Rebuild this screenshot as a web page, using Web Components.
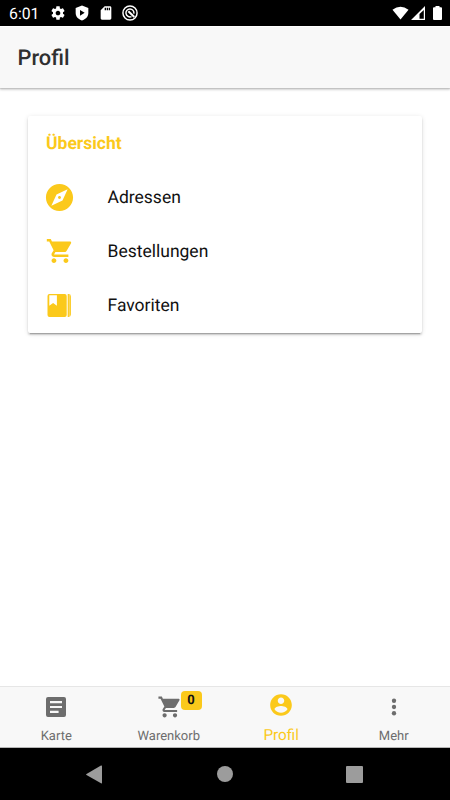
<!DOCTYPE html>
<html lang="de"><head><meta charset="utf-8"><title>Profil</title>
<style>html,body{margin:0;height:100%;overflow:hidden;background:#fff}body{font-family:Roboto,"Noto Sans",sans-serif;text-rendering:geometricPrecision}</style></head>
<body><profile-app></profile-app>
<script>
const icons={
 cart:['0 0 512 512','<path d="M169.6 377.6c-22.9 0-41.6 18.7-41.6 41.6s18.7 41.6 41.6 41.6 41.6-18.7 41.6-41.6-18.7-41.6-41.6-41.6zM48 51.2v41.6h41.6l74.9 151.7-31.3 50.9c-3.1 5.2-5.2 12.5-5.2 19.8 0 27.8 19 41.6 44.8 41.6H416v-40H177.9c-3.1 0-5.2-2.1-5.2-5.2 0-1 2.2-5.2 2.2-5.2l20.8-32.8h154.9c15.6 0 29.1-8.3 36.4-21.8l74.9-128.8c1.2-2.5 2.1-6.2 2.1-10.4 0-11.4-9.4-19.4-20.8-19.4H135.4L115.6 51.2H48zm326.4 326.4c-22.9 0-41.6 18.7-41.6 41.6s18.7 41.6 41.6 41.6S416 442.1 416 419.2s-18.7-41.6-41.6-41.6z"/>'],
 compass:['0 0 512 512','<path d="M256 231.4c-13.4 0-24.6 11.2-24.6 24.6s11.2 24.6 24.6 24.6 24.6-11.2 24.6-24.6-11.2-24.6-24.6-24.6zM256 32C132.8 32 32 132.8 32 256s100.8 224 224 224 224-100.8 224-224S379.2 32 256 32zm49.3 273.3L121.6 390.4l85.1-183.7L390.4 121.6l-85.1 183.7z"/>'],
 book:['0 0 31 31','<path fill-rule="evenodd" d="M5.500 4h15.200a2 2 0 0 1 2 2v19a2 2 0 0 1-2 2H5.500a2 2 0 0 1-2-2V6a2 2 0 0 1 2-2zM5.300 5.300v10.400L9.100 13l3.800 2.700V5.300z"/><path d="M23.700 4h.8a2.400 2.400 0 0 1 2.400 2.400v18.200a2.400 2.400 0 0 1-2.400 2.400h-.8z"/><path fill="#fff" opacity=".7" d="M24.900 4.500h.5v22h-.5z"/>'],
 list:['0 0 24 24','<path fill-rule="evenodd" d="M4 2h16a2 2 0 0 1 2 2v16a2 2 0 0 1-2 2H4a2 2 0 0 1-2-2V4a2 2 0 0 1 2-2zm2 4v2.200h12V6zm0 4.900V13.100h12v-2.200zM6 15.700v2.200h8.600v-2.200z"/>'],
 user:['0 0 24 24','<path d="M12 2C6.480 2 2 6.480 2 12s4.480 10 10 10 10-4.480 10-10S17.520 2 12 2zm0 3c1.660 0 3 1.340 3 3s-1.340 3-3 3-3-1.340-3-3 1.340-3 3-3zm0 14.200c-2.500 0-4.710-1.280-6-3.220.030-1.990 4-3.080 6-3.080 1.990 0 5.970 1.090 6 3.080-1.290 1.940-3.500 3.220-6 3.220z"/>'],
 more:['0 0 24 24','<circle cx="12" cy="6.2" r="2"/><circle cx="12" cy="12" r="2"/><circle cx="12" cy="17.8" r="2"/>'],
 gear:['0 0 24 24','<path d="M19.43 12.98c.04-.32.07-.64.07-.98s-.03-.66-.07-.98l2.11-1.65c.19-.15.24-.42.12-.64l-2-3.46c-.12-.22-.39-.3-.61-.22l-2.49 1c-.52-.4-1.08-.73-1.69-.98l-.38-2.65C14.46 2.18 14.25 2 14 2h-4c-.25 0-.46.18-.49.42l-.38 2.65c-.61.25-1.17.59-1.69.98l-2.49-1c-.23-.09-.49 0-.61.22l-2 3.46c-.13.22-.07.49.12.64l2.11 1.65c-.04.32-.07.65-.07.98s.03.66.07.98l-2.11 1.65c-.19.15-.24.42-.12.64l2 3.46c.12.22.39.3.61.22l2.49-1c.52.4 1.08.73 1.69.98l.38 2.65c.03.24.24.42.49.42h4c.25 0 .46-.18.49-.42l.38-2.65c.61-.25 1.17-.59 1.69-.98l2.49 1c.23.09.49 0 .61-.22l2-3.46c.12-.22.07-.49-.12-.64l-2.11-1.65zM12 15.5c-1.93 0-3.5-1.57-3.5-3.5s1.57-3.5 3.5-3.5 3.5 1.57 3.5 3.5-1.57 3.5-3.5 3.5z"/>'],
 shield:['0 0 24 24','<path fill-rule="evenodd" d="M12 .8 2.500 4.400V12c0 5.300 4 9.700 9.500 11.200 5.500-1.500 9.500-5.900 9.500-11.200V4.400zM9 7.500v8.500l7-4.250z"/>'],
 sd:['0 0 24 24','<path fill-rule="evenodd" d="M18 2h-8L4 8v12c0 1.100.9 2 2 2h12c1.100 0 2-.9 2-2V4c0-1.100-.9-2-2-2zm-6 6h-2V4h2zm3 0h-2V4h2zm3 0h-2V4h2z"/>'],
 search:['0 0 24 24','<g fill="none" stroke="currentColor" stroke-width="2.200"><circle cx="12" cy="12" r="10.600"/><path d="M14.200 17.400A6 6 0 1 1 17.800 13"/><path stroke-width="3" d="m9.500 9.500 9 8.500"/></g>'],
 wifi:['0 0 18 14','<path d="M.5 3.500Q9-3 17.500 3.500L9 14z"/>'],
 signal:['0 0 14 14','<path fill-rule="evenodd" d="M14 0v14H0zM12.800 4v8.800H8.500V8z"/>'],
 battery:['0 0 9 14','<path d="M2.500 0h4v1.300H8a1 1 0 0 1 1 1V13a1 1 0 0 1-1 1H1a1 1 0 0 1-1-1V2.300a1 1 0 0 1 1-1h1.500z"/>'],
 back:['0 0 16 19','<path d="M15 .5Q16 .1 16 1.200v16.600q0 1-1 .5L.5 10q-.8-.5 0-1z"/>'],
 home:['0 0 16 16','<circle cx="8" cy="8" r="8"/>'],
 recent:['0 0 17 17','<rect width="17" height="17" rx="1"/>']
};
const define=(name,html,setup)=>customElements.define(name,class extends HTMLElement{
 constructor(){super();this.attachShadow({mode:'open'})}
 connectedCallback(){
  const t=document.createElement('template');t.innerHTML=html;
  if(setup)setup(this,t.content);
  this.shadowRoot.replaceChildren(t.content.cloneNode(true));
 }
});
const copyIcon=(el,r)=>r.querySelector('app-icon').setAttribute('name',el.getAttribute('icon'));
define('app-icon','<style>:host{display:block;flex:none;width:var(--w);height:var(--h,var(--w))}svg{display:block;width:100%;height:100%;fill:currentColor}</style><svg></svg>',(el,r)=>{const i=icons[el.getAttribute('name')],s=r.querySelector('svg');s.setAttribute('viewBox',i[0]);s.innerHTML=i[1]});
define('status-bar',`<style>:host{display:flex;height:26px;background:#000;color:#fff;align-items:center;box-sizing:border-box;padding:0 8px 0 9px;font-size:15.800px;line-height:26px}.time{width:41px;padding-top:2px}.left{display:flex;gap:8px;align-items:center}.right{display:flex;gap:2px;margin-left:auto;align-items:center}.right app-icon:last-child{margin-left:6px}</style><span class="time">6:01</span><div class="left"><app-icon name="gear" style="--w:16px"></app-icon><app-icon name="shield" style="--w:16px"></app-icon><app-icon name="sd" style="--w:16px"></app-icon><app-icon name="search" style="--w:16px"></app-icon></div><div class="right"><app-icon name="wifi" style="--w:17px;--h:14px"></app-icon><app-icon name="signal" style="--w:14px"></app-icon><app-icon name="battery" style="--w:9px;--h:14px"></app-icon></div>`);
define('app-header','<style>:host{display:flex;align-items:center;height:62px;padding:2px 17.500px 0;box-sizing:border-box;background:#f8f8f8;color:#303030;font-size:21.800px;font-weight:500;border-top:1px solid #fff;box-shadow:0 2px 2px rgba(0,0,0,.16),0 1px 1px rgba(0,0,0,.1)}</style><slot></slot>');
define('app-card','<style>:host{display:block;margin:28px 28px 0;height:217px;box-sizing:border-box;background:#fff;border-radius:2px;box-shadow:0 2px 2px 0 rgba(0,0,0,.14),0 3px 1px -2px rgba(0,0,0,.2),0 1px 5px 0 rgba(0,0,0,.12)}h2{margin:0;height:54px;padding:1px 18px 0;box-sizing:border-box;font-size:17.500px;line-height:54px;font-weight:700;color:#fbc91b}</style><h2>Übersicht</h2><slot></slot>');
define('menu-item','<style>:host{display:flex;align-items:center;height:54px;padding-left:16px;gap:32.500px;font-size:17.500px;color:#111}app-icon{color:#fbc91b;--w:31px}:host([icon=cart]) app-icon{--w:30px;margin-right:1px}span{padding-top:1px}</style><app-icon></app-icon><span><slot></slot></span>',copyIcon);
define('tab-button','<style>:host{display:flex;flex:1 1 0;flex-direction:column;align-items:center;position:relative;color:#6d6d6d;font-size:13px}:host([active]){color:#fbc91b;font-size:15.300px}app-icon{--w:26px;margin-top:7px}:host([icon=list]) app-icon{--w:24px;margin:8px 0 1px}:host([active]) app-icon{margin-top:5px}span{line-height:20px;margin-top:7px}:host([active]) span{margin-top:7px}::slotted(tab-badge){position:absolute;left:68px;top:4px}</style><app-icon></app-icon><span></span><slot></slot>',(el,r)=>{copyIcon(el,r);r.querySelector('span').textContent=el.getAttribute('label')});
define('tab-badge','<style>:host{display:block;width:21px;height:19px;border-radius:4px;background:#fbc91b;color:#111;text-align:center;font-size:13px;font-weight:700;line-height:19px}</style><slot></slot>');
define('tab-bar','<style>:host{display:flex;height:62px;box-sizing:border-box;background:#f8f8f8;border-top:1px solid #e6e6e6;border-bottom:1px solid #b5b5b5}</style><slot></slot>');
define('nav-bar','<style>:host{display:flex;height:52px;background:#000;color:#9c9c9c;align-items:center;gap:113px;box-sizing:border-box;padding-left:86px}app-icon:first-of-type{margin-right:2px}</style><app-icon name="back" style="--w:16px;--h:19px"></app-icon><app-icon name="home" style="--w:16px"></app-icon><app-icon name="recent" style="--w:17px"></app-icon>');
define('profile-app','<style>:host{display:flex;flex-direction:column;width:450px;height:800px}main{flex:1}</style><status-bar></status-bar><app-header>Profil</app-header><main><app-card><menu-item icon="compass">Adressen</menu-item><menu-item icon="cart">Bestellungen</menu-item><menu-item icon="book">Favoriten</menu-item></app-card></main><tab-bar><tab-button icon="list" label="Karte"></tab-button><tab-button icon="cart" label="Warenkorb"><tab-badge>0</tab-badge></tab-button><tab-button icon="user" label="Profil" active></tab-button><tab-button icon="more" label="Mehr"></tab-button></tab-bar><nav-bar></nav-bar>');
</script></body></html>
